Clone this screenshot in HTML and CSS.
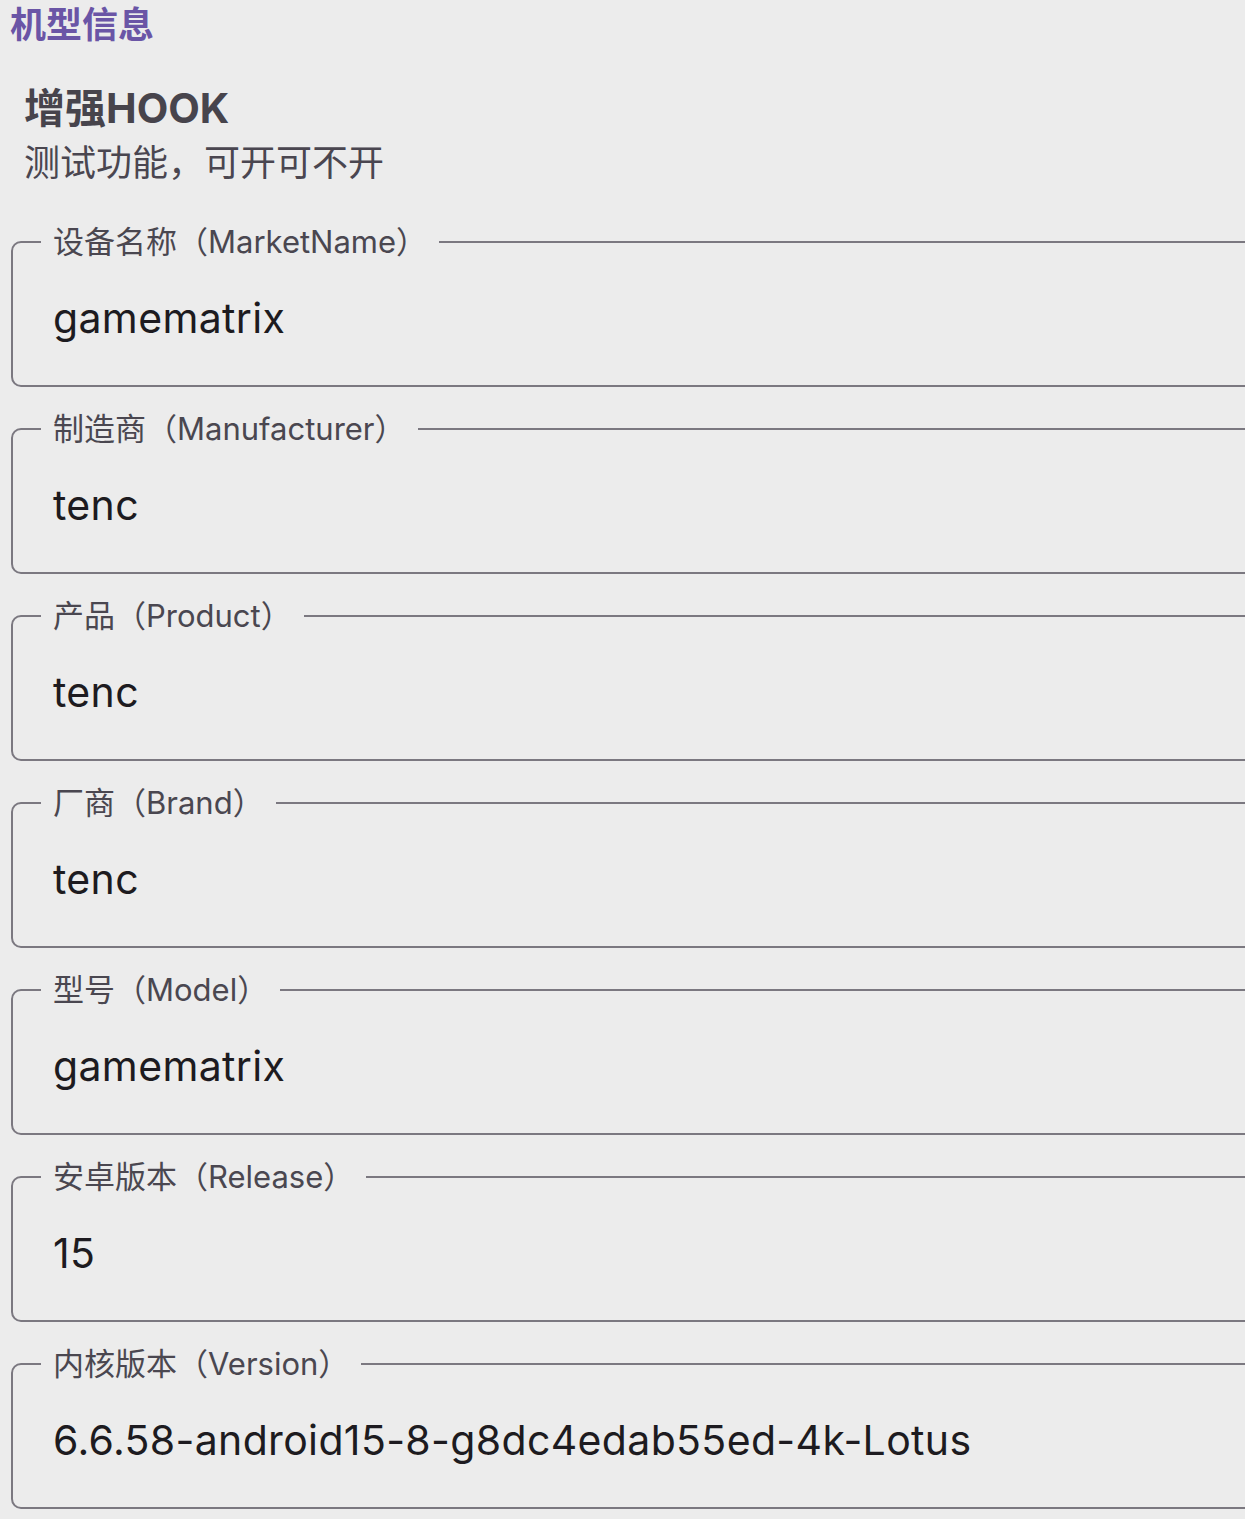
FILE: index.html
```html
<!DOCTYPE html>
<html lang="zh-CN">
<head>
<meta charset="utf-8">
<link rel="stylesheet" href="styles.css">
</head>
<body>
<div class="page">
  <div class="section-title">机型信息</div>
  <div class="hook">
    <div class="hook-title">增强HOOK</div>
    <div class="hook-sub">测试功能，可开可不开</div>
  </div>
  <div class="fields">
    <fieldset class="field"><legend>设备名称（MarketName）</legend><div class="value">gamematrix</div></fieldset>
    <fieldset class="field"><legend>制造商（Manufacturer）</legend><div class="value">tenc</div></fieldset>
    <fieldset class="field"><legend>产品（Product）</legend><div class="value">tenc</div></fieldset>
    <fieldset class="field"><legend>厂商（Brand）</legend><div class="value">tenc</div></fieldset>
    <fieldset class="field"><legend>型号（Model）</legend><div class="value">gamematrix</div></fieldset>
    <fieldset class="field"><legend>安卓版本（Release）</legend><div class="value">15</div></fieldset>
    <fieldset class="field"><legend>内核版本（Version）</legend><div class="value">6.6.58-android15-8-g8dc4edab55ed-4k-Lotus</div></fieldset>
  </div>
</div>
</body>
</html>
```
FILE: styles.css
```css
html, body {
  margin: 0;
  padding: 0;
  background: #ececec;
  overflow: hidden;
}
body {
  font-family: Inter, "Noto Sans CJK SC", sans-serif;
  width: 1245px;
  height: 1519px;
}
.page {
  padding: 4px 0 0 10px;
}
.section-title {
  font-size: 36px;
  font-weight: 700;
  color: #6a55a6;
  line-height: 42px;
}
.hook {
  padding: 36px 0 0 14px;
}
.hook-title {
  font-size: 41px;
  font-weight: 700;
  color: #47444c;
  line-height: 52px;
}
.hook-sub {
  font-size: 36px;
  color: #4a4650;
  line-height: 58px;
}
.fields {
  display: flex;
  flex-direction: column;
  gap: 22px;
  padding-top: 30px;
  padding-left: 1px;
}
.field {
  margin: 0;
  width: 1280px;
  box-sizing: border-box;
  border: 2.5px solid #7b7880;
  border-radius: 10px;
  padding: 0 0 0 40px;
  min-width: 0;
}
.field legend {
  font-size: 31px;
  line-height: 40px;
  color: #4a4750;
  padding: 0 12px;
  margin-left: -12px;
}
.value {
  font-size: 41px;
  letter-spacing: 0.35px;
  line-height: 56px;
  color: #1d1b20;
  padding: 28px 0 39px;
  white-space: nowrap;
}
```
